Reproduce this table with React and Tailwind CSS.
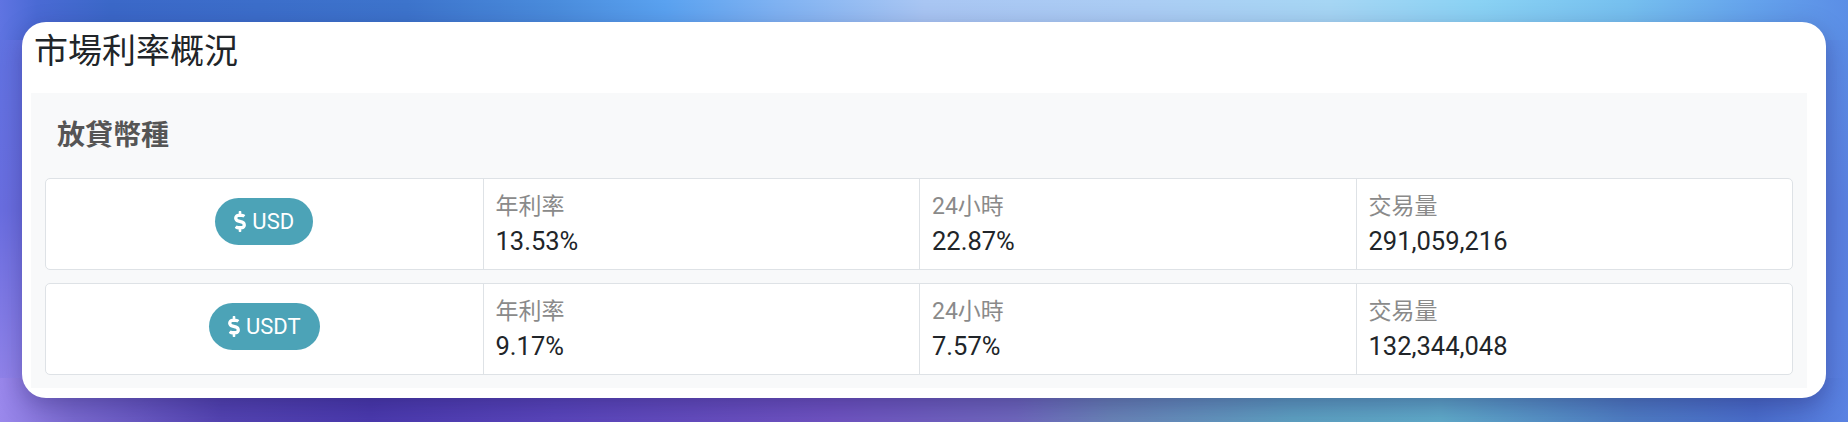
import React from "react";
import { FaDollarSign } from "react-icons/fa";

const rates = [
	{ coin: "USD", apr: "13.53%", day: "22.87%", volume: "291,059,216" },
	{ coin: "USDT", apr: "9.17%", day: "7.57%", volume: "132,344,048" },
];

const Stat = ({ label, value }) => (
	<div className="border-l border-[#dee2e6] pl-[12px] pt-[13px]">
		<div className="text-[23px] leading-[30px] text-[#8a8a8a]">{label}</div>
		<div className="text-[25.5px] leading-[38px] text-[#212529]">{value}</div>
	</div>
);

const App = () => {
	return (
		<div className="h-[422px] w-full px-[22px] pt-[22px] pb-[24px] bg-[#5b7fe0] bg-no-repeat font-['Roboto','Noto_Sans_CJK_TC',sans-serif] bg-[linear-gradient(to_right,#5f74e2_0%,#4a6ad4_2%,#3b68c8_6%,#3d74cc_22%,#4a8cdc_30%,#5aa2f0_36%,#7fb2f2_42%,#a9c6f3_50%,#abcdf4_62%,#a6d6f4_72%,#8ad2f4_80%,#76c0ef_88%,#64a2ec_95%,#5b8ee6_100%),linear-gradient(to_right,#9a88ec_0%,#7a6ad0_4%,#5444b2_12%,#4b3aae_20%,#5a46bc_30%,#7054c2_45%,#7068be_55%,#6a84b8_60%,#5ea2c2_70%,#60acca_78%,#4f7ec4_88%,#4a6ecc_95%,#5a82e2_100%),linear-gradient(to_bottom,#5f74e2,#6a6ee0_50%,#9a88ec),linear-gradient(to_bottom,#5b8ee6,#5a80e0_50%,#5a82e2)] [background-size:100%_40px,100%_44px,50px_100%,50px_100%] [background-position:top,bottom,left,right]">
			<div className="h-full bg-white rounded-[24px] pt-[9px] pl-[9px] pr-[19px] pb-[10px] shadow-[0_8px_24px_rgba(30,20,90,0.35)]">
				<h4 className="pl-[3px] text-[34px] leading-[40px] font-normal text-[#212529]">
					市場利率概況
				</h4>
				<div className="mt-[22px] bg-[#f8f9fa] px-[14px] pt-[23px] pb-[13px]">
					<h5 className="pl-[12px] text-[28px] leading-[40px] font-bold text-[#555555]">
						放貸幣種
					</h5>
					<div className="mt-[22px] flex flex-col gap-[13px]">
						{rates.map((r) => (
							<div
								key={r.coin}
								className="grid grid-cols-4 h-[92px] bg-white border border-[#dee2e6] rounded-[5px]"
							>
								<div className="flex items-center justify-center pb-[5px]">
									<span className="flex items-center gap-[6px] h-[47px] px-[19px] rounded-full bg-[#4ca3b7] text-white text-[22px]">
										<FaDollarSign className="w-[12px] h-[21px]" />
										{r.coin}
									</span>
								</div>
								<Stat label="年利率" value={r.apr} />
								<Stat label="24小時" value={r.day} />
								<Stat label="交易量" value={r.volume} />
							</div>
						))}
					</div>
				</div>
			</div>
		</div>
	);
};

export default App;
